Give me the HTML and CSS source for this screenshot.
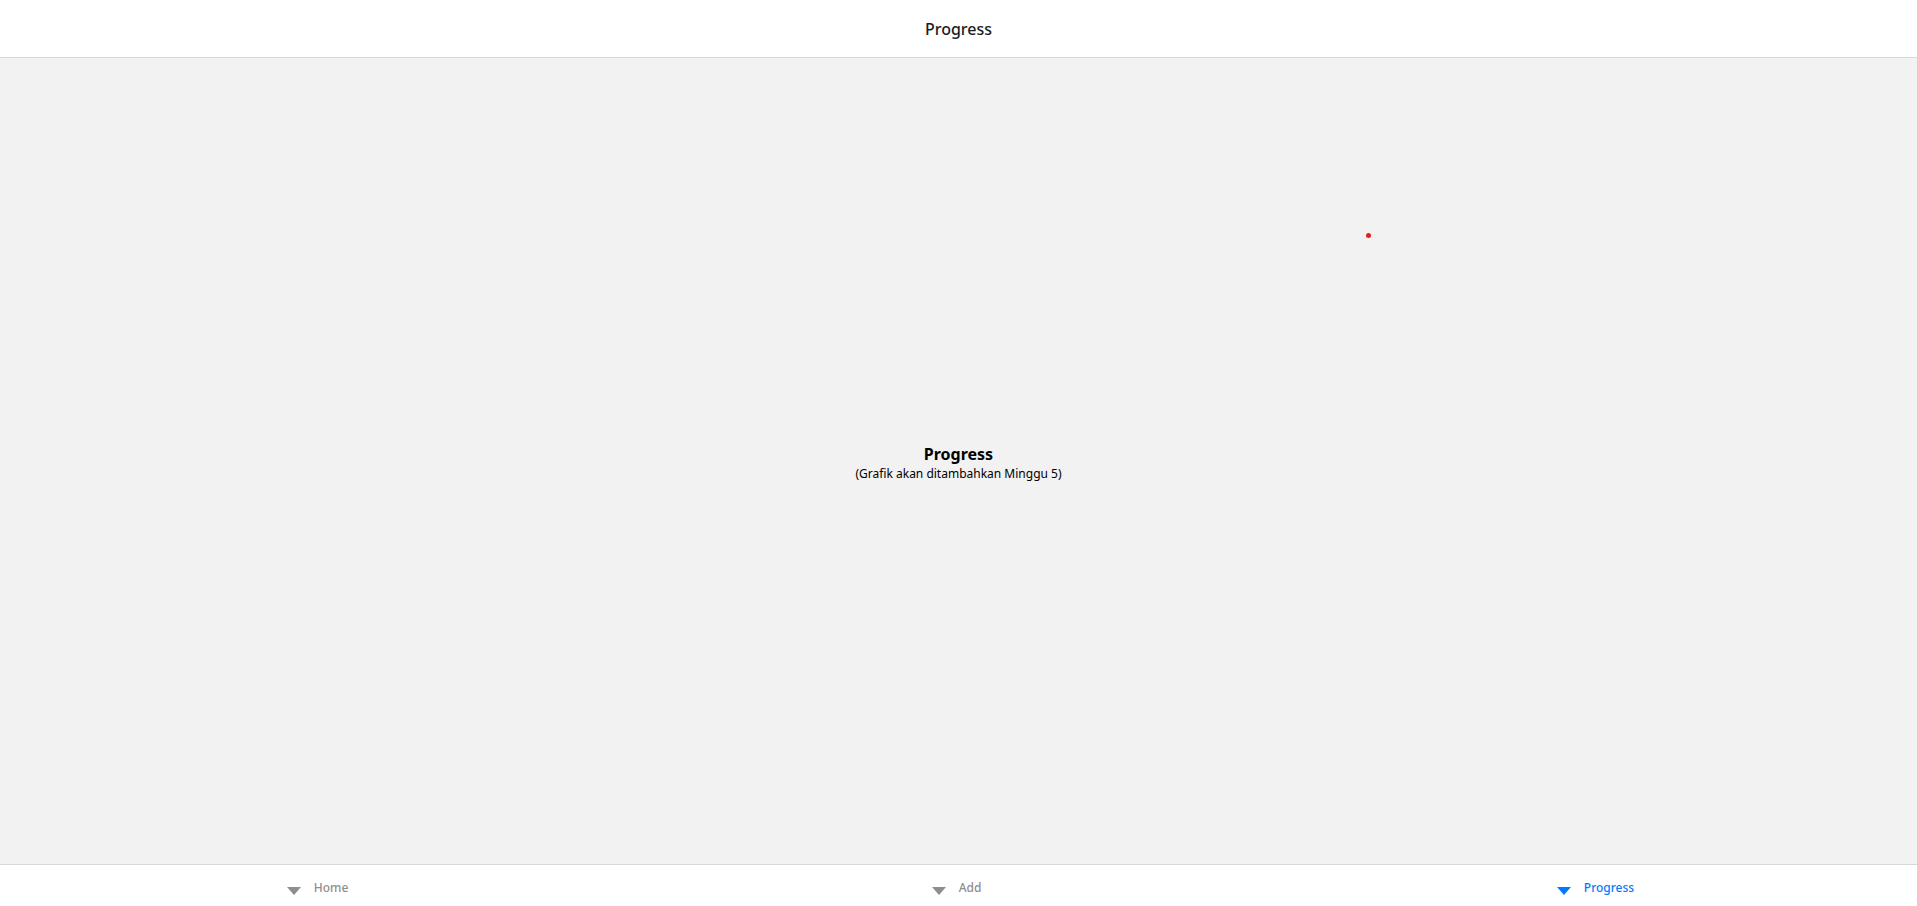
FILE: index.html
```html
<!DOCTYPE html>
<html lang="id">
<head>
<meta charset="utf-8">
<meta name="viewport" content="width=device-width, initial-scale=1">
<title>Progress</title>
<link rel="stylesheet" href="styles.css">
</head>
<body>
<div class="app">
  <header class="header"><h1 class="header-title">Progress</h1></header>
  <main class="screen">
    <h2 class="screen-title">Progress</h2>
    <p class="screen-note">(Grafik akan ditambahkan Minggu 5)</p>
    <span class="pointer-dot"></span>
  </main>
  <nav class="tabs">
    <a class="tab" href="#home"><svg class="tab-icon" viewBox="0 0 14 8" aria-hidden="true"><path d="M0 0H14L7 8Z"/></svg><span class="tab-label">Home</span></a>
    <a class="tab" href="#add"><svg class="tab-icon" viewBox="0 0 14 8" aria-hidden="true"><path d="M0 0H14L7 8Z"/></svg><span class="tab-label">Add</span></a>
    <a class="tab tab-active" href="#progress" aria-current="page"><svg class="tab-icon" viewBox="0 0 14 8" aria-hidden="true"><path d="M0 0H14L7 8Z"/></svg><span class="tab-label">Progress</span></a>
  </nav>
</div>
</body>
</html>
```
FILE: styles.css
```css
* { box-sizing: border-box; }
body {
  margin: 0;
  font-family: "Segoe UI", "Noto Sans", "Open Sans", sans-serif;
}
.app {
  display: flex;
  flex-direction: column;
  min-height: 100vh;
  background: #f2f2f2;
}
.header {
  display: flex;
  align-items: center;
  justify-content: center;
  padding: 17px 16px 15px;
  background: #fff;
  border-bottom: 1px solid #d8d8d8;
}
.header-title {
  margin: 0;
  font-size: 16px;
  font-weight: 500;
  line-height: 25px;
  color: #1c1c1e;
}
.screen {
  position: relative;
  flex: 1;
  display: flex;
  flex-direction: column;
  align-items: center;
  justify-content: center;
  padding-top: 4px;
  color: #000;
}
.screen-title {
  margin: 0;
  font-size: 16px;
  font-weight: 700;
  line-height: 21px;
}
.screen-note {
  margin: 0;
  font-size: 12px;
  line-height: 18px;
}
.pointer-dot {
  position: absolute;
  left: 1366px;
  top: 175px;
  width: 5px;
  height: 5px;
  border-radius: 50%;
  background: #ec1c1c;
}
.tabs {
  display: grid;
  grid-template-columns: repeat(3, 1fr);
  background: #fff;
  border-top: 1px solid #d8d8d8;
}
.tab {
  display: flex;
  align-items: center;
  justify-content: center;
  gap: 13px;
  padding: 14px 4px 9px 0;
  color: #8e8e8f;
  text-decoration: none;
}
.tab-active { color: #007aff; }
.tab-icon {
  width: 14px;
  height: 8px;
  margin-top: 5px;
  fill: currentColor;
}
.tab-label {
  font-size: 12px;
  font-weight: 500;
  line-height: 18px;
}
```
